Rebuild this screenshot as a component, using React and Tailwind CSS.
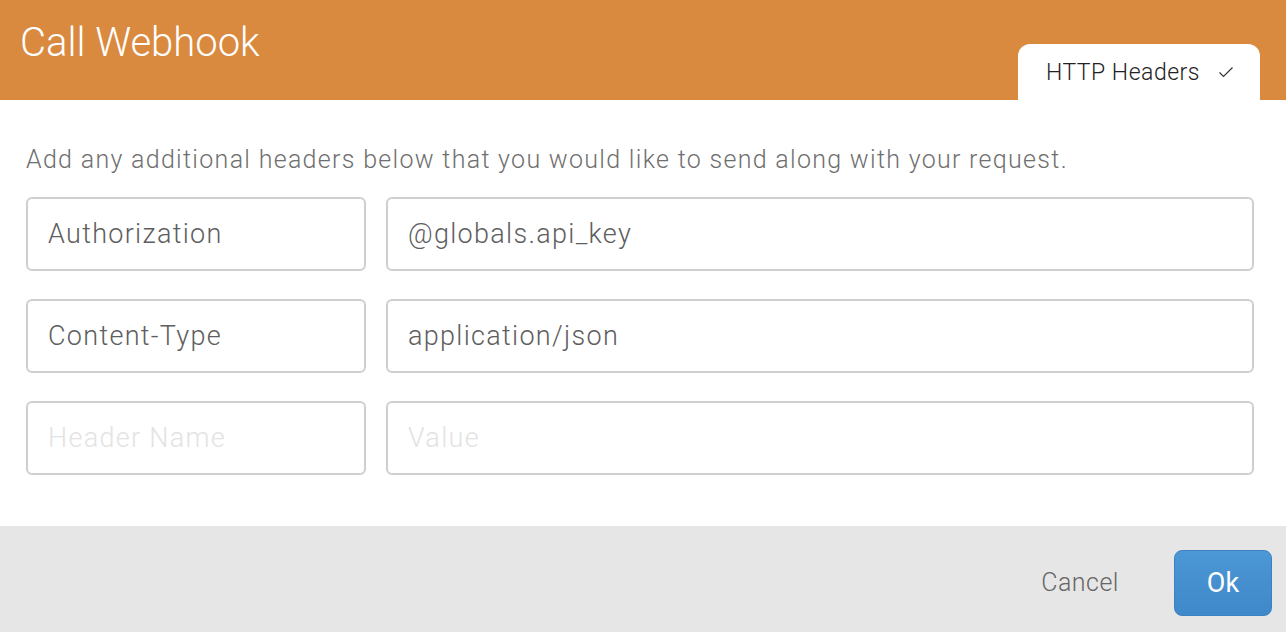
import React from "react";

const rows = [
  { name: "Authorization", value: "@globals.api_key" },
  { name: "Content-Type", value: "application/json" },
  { name: "", value: "" },
];

function CheckIcon() {
  return (
    <svg width="16" height="14" viewBox="0 0 16 14" fill="none" className="ml-[18px]">
      <path d="M1.5 7.5 L5.5 11.5 L14.5 2.5" stroke="#333" strokeWidth="1.2" />
    </svg>
  );
}

export default function App() {
  return (
    <div
      className="w-[1286px] h-[632px] flex flex-col bg-white overflow-hidden"
      style={{ fontFamily: "Roboto, 'Liberation Sans', sans-serif" }}
    >
      <header className="h-[100px] bg-[#d98a3f] flex justify-between items-start pl-[20px] pr-[26px]">
        <h1 className="mt-[17px] text-[40px] font-light text-white leading-[52px]">
          Call Webhook
        </h1>
        <div className="mt-[44px] h-[56px] bg-white rounded-t-[12px] flex items-center pl-[28px] w-[242px]">
          <span className="text-[23px] font-light text-[#222] leading-none tracking-[0.5px]">HTTP Headers</span>
          <CheckIcon />
        </div>
      </header>

      <main className="flex-1 px-[26px] pt-[44px]">
        <p className="text-[25px] font-light text-[#6f6f6f] leading-[32px] tracking-[1.3px]">
          Add any additional headers below that you would like to send along with your request.
        </p>
        <div className="mt-[21px] flex flex-col gap-[28px] pr-[6px]">
          {rows.map((row, i) => (
            <div key={i} className="flex gap-[20px]">
              <input
                defaultValue={row.name}
                placeholder="Header Name"
                className="w-[340px] h-[74px] rounded-[6px] border-2 border-[#cfcfcf] px-[20px] text-[27px] font-light tracking-[1.3px] text-[#5e5e5e] placeholder:text-[#e3e3e3] outline-none"
              />
              <input
                defaultValue={row.value}
                placeholder="Value"
                className="flex-1 h-[74px] rounded-[6px] border-2 border-[#cfcfcf] px-[20px] text-[27px] font-light tracking-[1.3px] text-[#5e5e5e] placeholder:text-[#e3e3e3] outline-none"
              />
            </div>
          ))}
        </div>
      </main>

      <footer className="h-[106px] bg-[#e6e6e6] flex items-center justify-end pr-[14px]">
        <button className="text-[25px] font-light tracking-[0.5px] text-[#666] mr-[55px] mt-[8px]">Cancel</button>
        <button className="w-[98px] h-[66px] rounded-[8px] bg-gradient-to-b from-[#4c97d6] to-[#3f88c9] border border-[#3d82c0] text-white text-[27px] font-normal mt-[8px]">
          Ok
        </button>
      </footer>
    </div>
  );
}
